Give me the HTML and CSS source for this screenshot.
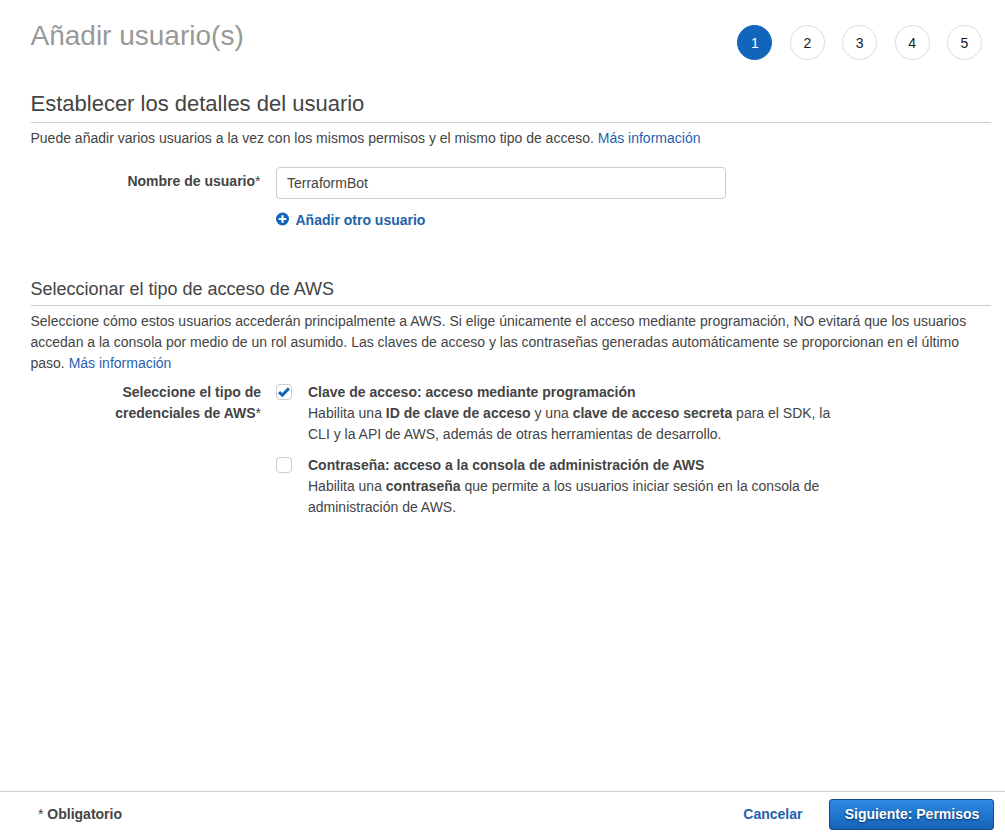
FILE: index.html
```html
<!DOCTYPE html>
<html lang="es">
<head>
<meta charset="utf-8">
<title>Añadir usuario(s)</title>
<link rel="stylesheet" href="styles.css">
</head>
<body>
<div class="page">
  <header class="top">
    <h1 class="title">Añadir usuario(s)</h1>
    <ol class="steps">
      <li class="step active">1</li>
      <li class="step">2</li>
      <li class="step">3</li>
      <li class="step">4</li>
      <li class="step">5</li>
    </ol>
  </header>
  <main class="content">
    <section class="details">
      <h2 class="heading">Establecer los detalles del usuario</h2>
      <p class="intro">Puede añadir varios usuarios a la vez con los mismos permisos y el mismo tipo de acceso. <a class="link">Más información</a></p>
      <div class="row user-row">
        <label class="label name-label" for="user">Nombre de usuario<span class="star">*</span></label>
        <div class="field">
          <input class="input" id="user" type="text" value="TerraformBot">
          <a class="add"><svg class="plus" viewBox="0 0 14 14"><circle cx="6.5" cy="7" r="6.5" fill="#1166bb"/><path d="M6.5 3.2v7.6M2.7 7h7.6" stroke="#fff" stroke-width="2.2"/></svg><span>Añadir otro usuario</span></a>
        </div>
      </div>
    </section>
    <section class="access">
      <h3 class="subheading">Seleccionar el tipo de acceso de AWS</h3>
      <p class="intro">Seleccione cómo estos usuarios accederán principalmente a AWS. Si elige únicamente el acceso mediante programación, NO evitará que los usuarios<br>accedan a la consola por medio de un rol asumido. Las claves de acceso y las contraseñas generadas automáticamente se proporcionan en el último<br>paso. <a class="link">Más información</a></p>
      <div class="row access-row">
        <div class="label">Seleccione el tipo de<br>credenciales de AWS<span class="star">*</span></div>
        <div class="options">
          <div class="option">
            <span class="box"><svg class="check" viewBox="0 0 16 16"><path d="M3 8.2 6.3 11.2 12.9 4.4" fill="none" stroke="#1166bb" stroke-width="3"/></svg></span>
            <div><b>Clave de acceso: acceso mediante programación</b><br>Habilita una <b>ID de clave de acceso</b> y una <b>clave de acceso secreta</b> para el SDK, la<br>CLI y la API de AWS, además de otras herramientas de desarrollo.</div>
          </div>
          <div class="option">
            <span class="box"></span>
            <div><b>Contraseña: acceso a la consola de administración de AWS</b><br>Habilita una <b>contraseña</b> que permite a los usuarios iniciar sesión en la consola de<br>administración de AWS.</div>
          </div>
        </div>
      </div>
    </section>
  </main>
  <footer class="footer">
    <div class="required"><span class="star">*</span> Obligatorio</div>
    <a class="cancel">Cancelar</a>
    <button class="next">Siguiente: Permisos</button>
  </footer>
</div>
</body>
</html>
```
FILE: styles.css
```css
* { box-sizing: border-box; }
body {
  margin: 0;
  background: #fff;
  color: #444;
  font: 14px/21px "Liberation Sans", Arial, sans-serif;
}
h1, h2, h3, p, ol { margin: 0; padding: 0; font-weight: normal; }
.page { height: 835px; display: flex; flex-direction: column; overflow: hidden; }
.top {
  display: flex;
  justify-content: space-between;
  align-items: flex-start;
  padding: 18px 23px 0 30.5px;
  height: 88px;
}
.title { font-size: 28px; line-height: 35px; color: #999; }
.steps { display: flex; gap: 17.4px; list-style: none; padding-top: 7px; }
.step {
  width: 35px;
  height: 35px;
  border: 1px solid #ddd;
  border-radius: 50%;
  color: #16191f;
  line-height: 35px;
  text-align: center;
}
.active { background: #1166bb; border-color: #1166bb; color: #fff; }
.content { flex: 1; padding: 0 14px 0 30.5px; }
.heading { font-size: 22px; line-height: 31px; height: 35px; border-bottom: 1px solid #ccc; }
.intro { padding-top: 5px; white-space: nowrap; }
.link { color: #1f5fb0; }
.row { display: flex; gap: 15px; }
.user-row { padding-top: 18px; }
.label { width: 230.5px; flex: none; text-align: right; font-weight: bold; }
.name-label { padding: 4px 0.5px 0 0; }
.star { font-weight: normal; }
.field { display: flex; flex-direction: column; gap: 11px; }
.input {
  width: 450px;
  height: 32px;
  padding: 0 10px;
  border: 1px solid #ccc;
  border-radius: 4px;
  color: #444;
  font: inherit;
}
.add { display: flex; align-items: flex-start; gap: 5.5px; color: #1f61ab; font-weight: bold; }
.plus { width: 14px; height: 14px; margin-top: 2px; }
.access { padding-top: 48px; }
.subheading { font-size: 18px; line-height: 21px; height: 27px; border-bottom: 1px solid #ccc; }
.access-row { padding-top: 8px; }
.options { display: flex; flex-direction: column; gap: 10px; white-space: nowrap; }
.option { display: flex; gap: 16px; }
.box {
  flex: none;
  width: 16px;
  height: 16px;
  margin-top: 2px;
  border: 1px solid #ccc;
  border-radius: 4px;
}
.check { display: block; width: 16px; height: 16px; margin: -1px; }
.footer {
  display: flex;
  align-items: center;
  height: 44px;
  padding: 1px 11px 0 38px;
  border-top: 1px solid #ccd3d8;
  font-weight: bold;
}
.required { flex: 1; }
.cancel { color: #1f61ab; margin-right: 26.5px; }
.next {
  width: 165px;
  height: 31px;
  padding: 0 0 0 1px;
  border: 1px solid #124b86;
  border-radius: 3px;
  background: linear-gradient(#2e8ae3, #1463b7);
  color: #fff;
  font: inherit;
  text-shadow: 0 1px 2px #063266;
}
```
